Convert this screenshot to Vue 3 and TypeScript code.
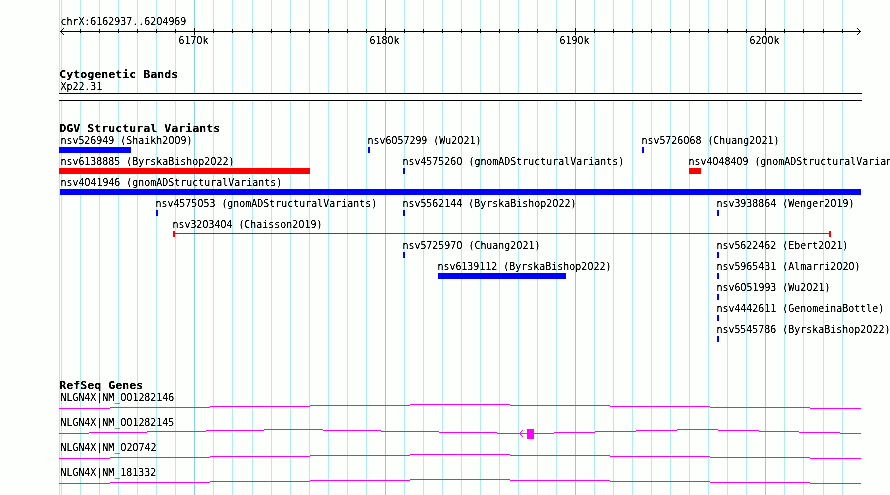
<script setup lang="ts">
interface Variant { id: string; study: string; row: number; x: number; width: number; color: string; labelX?: number }
interface Gene { name: string; y: number; steps: number[][] }
interface Label { x: number; y: number; text: string }
interface Run { text: string; x: number; zero: boolean }

const majors = [
  { x: 194, label: '6170k' },
  { x: 385, label: '6180k' },
  { x: 575, label: '6190k' },
  { x: 765, label: '6200k' },
]
const minors = [61, 80, 99, 118, 137, 156, 175, 213, 232, 252, 271, 290, 309, 328, 347, 366, 404, 423, 442, 461, 480, 499, 518, 537, 556, 594, 613, 632, 651, 670, 689, 708, 727, 746, 784, 803, 823, 842]

const blue = '#0000ff'
const red = '#ff0000'
const variants: Variant[] = [
  { id: 'nsv526949', study: 'Shaikh2009', row: 0, x: 59, width: 72, color: blue, labelX: 60 },
  { id: 'nsv6057299', study: 'Wu2021', row: 0, x: 368, width: 2, color: blue },
  { id: 'nsv5726068', study: 'Chuang2021', row: 0, x: 642, width: 2, color: blue },
  { id: 'nsv6138885', study: 'ByrskaBishop2022', row: 1, x: 59, width: 251, color: red, labelX: 60 },
  { id: 'nsv4575260', study: 'gnomADStructuralVariants', row: 1, x: 403, width: 2, color: blue },
  { id: 'nsv4048409', study: 'gnomADStructuralVariants', row: 1, x: 689, width: 12, color: red },
  { id: 'nsv4041946', study: 'gnomADStructuralVariants', row: 2, x: 60, width: 801, color: blue, labelX: 60 },
  { id: 'nsv4575053', study: 'gnomADStructuralVariants', row: 3, x: 156, width: 2, color: blue },
  { id: 'nsv5562144', study: 'ByrskaBishop2022', row: 3, x: 403, width: 2, color: blue },
  { id: 'nsv3938864', study: 'Wenger2019', row: 3, x: 717, width: 2, color: blue },
  { id: 'nsv3203404', study: 'Chaisson2019', row: 4, x: 173, width: 2, color: red },
  { id: 'nsv5725970', study: 'Chuang2021', row: 5, x: 403, width: 2, color: blue },
  { id: 'nsv5622462', study: 'Ebert2021', row: 5, x: 717, width: 2, color: blue },
  { id: 'nsv6139112', study: 'ByrskaBishop2022', row: 6, x: 438, width: 128, color: blue },
  { id: 'nsv5965431', study: 'Almarri2020', row: 6, x: 717, width: 2, color: blue },
  { id: 'nsv6051993', study: 'Wu2021', row: 7, x: 717, width: 2, color: blue },
  { id: 'nsv4442611', study: 'GenomeinaBottle', row: 8, x: 717, width: 2, color: blue },
  { id: 'nsv5545786', study: 'ByrskaBishop2022', row: 9, x: 717, width: 2, color: blue },
]

// Each step is [start x, rise above the track's base line].
const wide = [[59, 0], [110, 1], [210, 2], [310, 3], [410, 4], [510, 3], [610, 2], [710, 1], [810, 0]]
const split = [[59, 0], [89, 1], [147, 2], [206, 3], [264, 4], [323, 3], [381, 2], [439, 1], [497, 0], [554, 1], [595, 2], [636, 3], [677, 4], [718, 3], [759, 2], [799, 1], [840, 0]]
const genes: Gene[] = [
  { name: 'NLGN4X|NM_001282146', y: 408, steps: wide },
  { name: 'NLGN4X|NM_001282145', y: 433, steps: split },
  { name: 'NLGN4X|NM_020742', y: 458, steps: wide },
  { name: 'NLGN4X|NM_181332', y: 483, steps: wide },
]
const intron = (g: Gene): string =>
  g.steps.map(([x, rise], i) => `M${x} ${g.y - rise + 0.5}H${g.steps[i + 1]?.[0] ?? 861}`).join('')

const labels: Label[] = [
  { x: 60, y: 25, text: 'chrX:6162937..6204969' },
  ...majors.map((m) => ({ x: m.x - 16, y: 44, text: m.label })),
  { x: 60, y: 90, text: 'Xp22.31' },
  ...variants.map((v) => ({ x: v.labelX ?? v.x - 1, y: 144 + 21 * v.row, text: `${v.id} (${v.study})` })),
  ...genes.map((g) => ({ x: 60, y: g.y - 7, text: g.name })),
]

// Labels sit on a 6px character grid; zeros use the face with an open zero.
const squeeze = 0.906
const pitch = 6 / squeeze
const runs = (text: string): Run[] => {
  let column = 0
  return text.split(/(0)/).filter(Boolean).map((part) => {
    const zero = part === '0'
    const x = column * pitch - (zero ? 0.2 : 0)
    column += part.length
    return { text: part, x, zero }
  })
}
</script>

<template>
  <svg class="browser" width="890" height="495" viewBox="0 0 890 495" shape-rendering="crispEdges">
    <defs>
      <filter id="crisp" filterUnits="userSpaceOnUse" x="0" y="0" width="890" height="495" color-interpolation-filters="sRGB">
        <feComponentTransfer><feFuncA type="table" tableValues="0 0 0.2 0.7 1 1 1" /></feComponentTransfer>
      </filter>
    </defs>

    <g class="grid">
      <rect class="minor" x="59" y="0" width="1" height="495" />
      <rect v-for="x in minors" :key="x" class="minor" :x="x" y="0" width="1" height="495" />
      <rect v-for="m in majors" :key="m.x" class="major" :x="m.x" y="0" width="1" height="495" />
    </g>

    <g class="axis">
      <path d="M60 31.5H861M63.5 28v1M62.5 29v1M61.5 30v1M61.5 32v1M62.5 33v1M63.5 34v1M857.5 28v1M858.5 29v1M859.5 30v1M859.5 32v1M858.5 33v1M857.5 34v1" />
      <rect v-for="x in minors.slice(1)" :key="x" :x="x" y="29" width="1" height="4" />
      <rect v-for="m in majors" :key="m.x" :x="m.x" y="28" width="1" height="7" />
    </g>

    <g class="band">
      <rect class="fill" x="59" y="93" width="803" height="8" />
      <path d="M59 93.5H862M59 100.5H862" />
    </g>

    <g>
      <path class="span" d="M173 233.5H831" />
      <rect v-for="v in variants" :key="v.id" :x="v.x" :y="147 + 21 * v.row" :width="v.width" height="6" :fill="v.color" />
      <rect class="cap" x="829" y="231" width="2" height="6" />
    </g>

    <g class="genes">
      <path v-for="g in genes" :key="g.name" :d="intron(g)" />
      <rect x="527" y="429" width="7" height="10" />
      <path d="M520.5 432v3M521.5 431v1M521.5 435v1M522.5 430v1M522.5 436v1" />
    </g>

    <g filter="url(#crisp)">
      <g class="label">
        <text v-for="(l, i) in labels" :key="i" :transform="`translate(${l.x + 0.4} ${l.y}) scale(${squeeze} 1)`"><tspan v-for="r in runs(l.text)" :key="r.x" :x="r.x" :class="{ zero: r.zero }">{{ r.text }}</tspan></text>
      </g>
      <g class="heading">
        <text x="59.3" y="78" textLength="119" lengthAdjust="spacingAndGlyphs">Cytogenetic Bands</text>
        <text x="59.3" y="132" textLength="161" lengthAdjust="spacingAndGlyphs">DGV Structural Variants</text>
        <text x="59.3" y="389" textLength="84" lengthAdjust="spacingAndGlyphs">RefSeq Genes</text>
      </g>
    </g>
  </svg>
</template>

<style>
body { margin: 0; background: #fdfffd; overflow: hidden; }
</style>

<style scoped>
.browser { display: block; background: #fdfffd; }
.minor { fill: #afeeee; }
.major { fill: #87ceeb; }
.axis path, .band path { stroke: #000; fill: none; }
.fill { fill: #fff; }
.span { stroke: #f00; }
.cap { fill: #f00; }
.genes path { stroke: #f0f; fill: none; }
.genes rect { fill: #f0f; }
.label, .heading { font-family: "DejaVu Sans Mono", monospace; font-size: 11px; fill: #000; white-space: pre; }
.zero { font-family: "DejaVu Sans", sans-serif; }
.heading { font-weight: 700; }
</style>
